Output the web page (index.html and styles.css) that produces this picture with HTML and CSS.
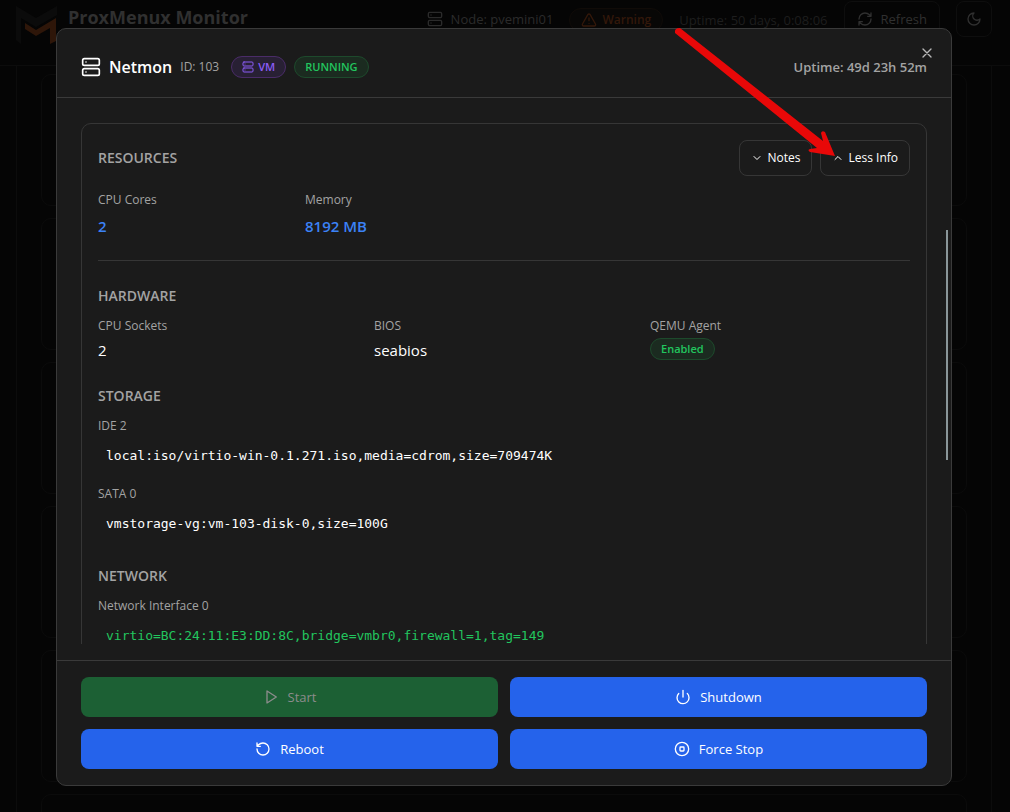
FILE: index.html
```html
<!DOCTYPE html>
<html lang="en">
<head>
<meta charset="utf-8">
<meta name="viewport" content="width=device-width, initial-scale=1">
<title>ProxMenux Monitor</title>
<link rel="stylesheet" href="styles.css">
</head>
<body>
<svg class="defs" aria-hidden="true">
  <symbol id="server" viewBox="0 0 24 24"><rect x="2" y="2" width="20" height="8" rx="2"/><rect x="2" y="14" width="20" height="8" rx="2"/><path d="M6 6h.01M6 18h.01"/></symbol>
</svg>
<div class="page">
  <header class="topbar">
    <svg class="logo" viewBox="0 0 42 40" aria-hidden="true"><path class="logo-back" d="M0 0l20 12L41 0v9L20 21 5 12v26l-5-4z"/><path class="logo-front" d="M9 17l11 7 20-12v23l-6 3V22L20 30 9 23z"/></svg>
    <h1 class="brand">ProxMenux Monitor</h1>
    <div class="node"><svg class="icon i16"><use href="#server"/></svg>Node: pvemini01</div>
    <div class="warning"><svg class="icon i16" viewBox="0 0 24 24"><path d="m21.7 18-8-14a2 2 0 0 0-3.500 0l-8 14A2 2 0 0 0 4 21h16a2 2 0 0 0 1.700-3M12 9v4M12 17h.01"/></svg>Warning</div>
    <div class="sys-uptime">Uptime: 50 days, 0:08:06</div>
    <button class="ghost refresh"><svg class="icon i16" viewBox="0 0 24 24"><path d="M3 12a9 9 0 0 1 9-9 9.700 9.700 0 0 1 6.700 2.700L21 8M21 3v5h-5M21 12a9 9 0 0 1-9 9 9.700 9.700 0 0 1-6.700-2.700L3 16M8 16H3v5"/></svg>Refresh</button>
    <button class="ghost theme" aria-label="Toggle theme"><svg class="icon i16" viewBox="0 0 24 24"><path d="M12 3a6 6 0 0 0 9 9 9 9 0 1 1-9-9"/></svg></button>
  </header>
  <main class="list">
    <div class="list-item"></div><div class="list-item"></div><div class="list-item"></div><div class="list-item"></div><div class="list-item"></div><div class="list-item"></div>
  </main>
</div>
<div class="overlay">
  <section class="dialog" role="dialog" aria-modal="true" aria-labelledby="vm-name">
    <header class="dialog-head">
      <svg class="icon head-icon"><use href="#server"/></svg>
      <h2 class="vm-name" id="vm-name">Netmon</h2>
      <span class="vm-id">ID: 103</span>
      <span class="badge violet"><svg class="icon i12"><use href="#server"/></svg>VM</span>
      <span class="badge green">RUNNING</span>
      <span class="vm-uptime">Uptime: 49d 23h 52m</span>
      <button class="close" aria-label="Close"><svg class="icon i16" viewBox="0 0 24 24"><path d="M18 6 6 18M6 6l12 12"/></svg></button>
    </header>
    <div class="dialog-body">
      <div class="card">
        <div class="card-head">
          <h3 class="title">RESOURCES</h3>
          <div class="card-actions">
            <button class="outline"><svg class="icon i12" viewBox="0 0 24 24"><path d="m6 9 6 6 6-6"/></svg>Notes</button>
            <button class="outline"><svg class="icon i12" viewBox="0 0 24 24"><path d="m18 15-6-6-6 6"/></svg>Less Info</button>
          </div>
        </div>
        <div class="grid four">
          <div><div class="label">CPU Cores</div><div class="value blue">2</div></div>
          <div><div class="label">Memory</div><div class="value blue">8192 MB</div></div>
        </div>
        <div class="details">
          <section class="group">
            <h3 class="title">HARDWARE</h3>
            <div class="grid three">
              <div><div class="label">CPU Sockets</div><div class="value plain">2</div></div>
              <div><div class="label">BIOS</div><div class="value plain">seabios</div></div>
              <div><div class="label">QEMU Agent</div><span class="badge green agent">Enabled</span></div>
            </div>
          </section>
          <section class="group">
            <h3 class="title">STORAGE</h3>
            <div><div class="label">IDE 2</div><div class="code">local:iso/virtio-win-0.1.271.iso,media=cdrom,size=709474K</div></div>
            <div><div class="label">SATA 0</div><div class="code">vmstorage-vg:vm-103-disk-0,size=100G</div></div>
          </section>
          <section class="group">
            <h3 class="title">NETWORK</h3>
            <div><div class="label">Network Interface 0</div><div class="code net">virtio=BC:24:11:E3:DD:8C,bridge=vmbr0,firewall=1,tag=149</div></div>
          </section>
        </div>
      </div>
      <div class="scroll-thumb"></div>
    </div>
    <footer class="dialog-foot">
      <button class="action start" disabled><svg class="icon i16" viewBox="0 0 24 24"><path d="m6 3 14 9-14 9z"/></svg>Start</button>
      <button class="action"><svg class="icon i16" viewBox="0 0 24 24"><path d="M12 2v10M18.400 6.600a9 9 0 1 1-12.770.040"/></svg>Shutdown</button>
      <button class="action"><svg class="icon i16" viewBox="0 0 24 24"><path d="M3 12a9 9 0 1 0 9-9 9.750 9.750 0 0 0-6.740 2.740L3 8M3 3v5h5"/></svg>Reboot</button>
      <button class="action"><svg class="icon i16" viewBox="0 0 24 24"><circle cx="12" cy="12" r="10"/><rect x="9" y="9" width="6" height="6" rx="1"/></svg>Force Stop</button>
    </footer>
  </section>
</div>
<svg class="arrow" viewBox="0 0 162 130" aria-hidden="true"><path class="arrow-shape" d="M6 0L149 113L147 105Q148 102 151 104L161 128L136 124Q133 122 136 121L143 120L1 5Q0 0 6 0Z"/></svg>
</body>
</html>
```
FILE: styles.css
```css
* { box-sizing: border-box; }
body { margin: 0; height: 100vh; overflow: hidden; background: #050505; color: #fff; font: 14px/20px "Open Sans", "Noto Sans", sans-serif; }
h1, h2, h3 { margin: 0; }
button { font: inherit; color: inherit; }
.defs { position: absolute; width: 0; height: 0; }
.icon { fill: none; stroke: currentColor; stroke-width: 2; stroke-linecap: round; stroke-linejoin: round; flex: none; }
.i12 { width: 12px; height: 12px; }
.i16 { width: 16px; height: 16px; }

.page { height: 100vh; overflow: hidden; }
.topbar { display: flex; align-items: flex-start; height: 66px; padding: 0 18px 0 16px; border-bottom: 1px solid #0c0c0c; color: #2b2b2b; }
.logo { width: 42px; height: 40px; margin-top: 6px; flex: none; }
.logo-back { fill: #0b0b0b; }
.logo-front { fill: #2e1609; }
.brand { margin: 3px auto 0 10px; font-size: 18px; line-height: 28px; font-weight: 700; white-space: nowrap; color: #303030; }
.node { display: flex; gap: 8px; align-items: center; margin-top: 9px; font-size: 13px; white-space: nowrap; }
.warning { display: flex; gap: 5px; align-items: center; height: 24px; margin: 8px 16px 0 16px; padding: 0 11px; border: 1px solid #100b08; border-radius: 12px; background: #080706; color: #33180a; font-size: 12px; font-weight: 600; }
.sys-uptime { margin: 10px 16px 0 0; color: #1e1e1e; font-size: 13px; white-space: nowrap; }
.ghost { display: flex; align-items: center; gap: 8px; height: 36px; margin-top: 1px; padding: 0 12px; border: 1px solid #0e0e0e; border-radius: 8px; background: none; color: #303030; font-size: 13px; }
.theme { padding: 0 9px; margin-left: 16px; }
.list { margin: 0 18px 0 16px; padding: 8px 24px; border: solid #0c0c0c; border-width: 0 1px; display: grid; gap: 12px; }
.list-item { height: 132px; border: 1px solid #0b0b0b; border-radius: 10px; }

.overlay { position: fixed; inset: 0; display: flex; justify-content: center; padding: 28px 58px 26px 56px; }
.dialog { display: flex; flex-direction: column; flex: 1; max-width: 896px; border: 1px solid #3a3a3a; border-radius: 10px; background: #1b1b1b; }
.dialog-head { position: relative; display: flex; align-items: center; gap: 8px; height: 69px; padding: 8px 24px 0; border-bottom: 1px solid #3a3a3a; flex: none; }
.head-icon { width: 20px; height: 20px; }
.vm-name { font-size: 16px; line-height: 24px; font-weight: 600; }
.vm-id { font-size: 12px; color: #a3a3a3; }
.badge { display: inline-flex; align-items: center; justify-content: center; gap: 4px; height: 22px; padding: 0 10px; border: 1px solid; border-radius: 11px; font-size: 11px; line-height: 16px; font-weight: 600; }
.violet { margin-left: 4px; color: #8b5cf6; background: #282034; border-color: #4a2c68; }
.green { color: #22c55e; background: #1b2b20; border-color: #1d4a2c; }
.vm-uptime { margin-left: auto; font-size: 13px; font-weight: 600; color: #a3a3a3; white-space: nowrap; }
.close { position: absolute; top: 16px; right: 16px; width: 16px; height: 16px; padding: 0; border: 0; background: none; color: #b8b8b8; }
.close .icon { display: block; }

.dialog-body { position: relative; flex: 1; min-height: 0; overflow: hidden; margin-bottom: 16px; padding: 25px 24px 0; }
.card { padding: 16px 16px 32px; border: 1px solid #363636; border-radius: 10px; }
.card-head { display: flex; justify-content: space-between; align-items: center; margin-bottom: 16px; }
.card-actions { display: flex; gap: 8px; }
.title { font-size: 14px; line-height: 20px; font-weight: 600; color: #a3a3a3; }
.outline { display: flex; align-items: center; gap: 4px; height: 36px; padding: 0 11px; border: 1px solid #363636; border-radius: 8px; background: none; font-size: 12px; font-weight: 500; }
.grid { display: grid; gap: 16px; }
.four { grid-template-columns: repeat(4, 1fr); }
.three { grid-template-columns: repeat(3, 1fr); }
.label { margin-bottom: 4px; font-size: 12px; line-height: 16px; color: #a3a3a3; }
.value { line-height: 28px; font-size: 15px; }
.blue { font-weight: 600; color: #3b82f6; }
.plain { line-height: 24px; }
.agent { height: 22px; vertical-align: top; }
.details { display: grid; gap: 24px; margin-top: 20px; padding-top: 25px; border-top: 1px solid #363636; }
.group { display: grid; gap: 12px; }
.code { padding: 8px; font: 13px/20px "DejaVu Sans Mono", "Liberation Mono", monospace; overflow-wrap: anywhere; }
.net { color: #22c55e; }
.scroll-thumb { position: absolute; right: 3px; top: 132px; width: 2px; height: 230px; background: #8a9699; }

.dialog-foot { display: grid; grid-template-columns: 1fr 1fr; gap: 12px; padding: 16px 24px; border-top: 1px solid #3a3a3a; }
.action { display: flex; align-items: center; justify-content: center; gap: 9px; height: 40px; border: 0; border-radius: 8px; background: #2563eb; font-size: 13px; }
.start { background: #1c6034; color: #8c8c8c; }
.arrow { position: absolute; left: 674px; top: 28px; width: 162px; height: 130px; pointer-events: none; }
.arrow-shape { fill: #e80808; }
```
